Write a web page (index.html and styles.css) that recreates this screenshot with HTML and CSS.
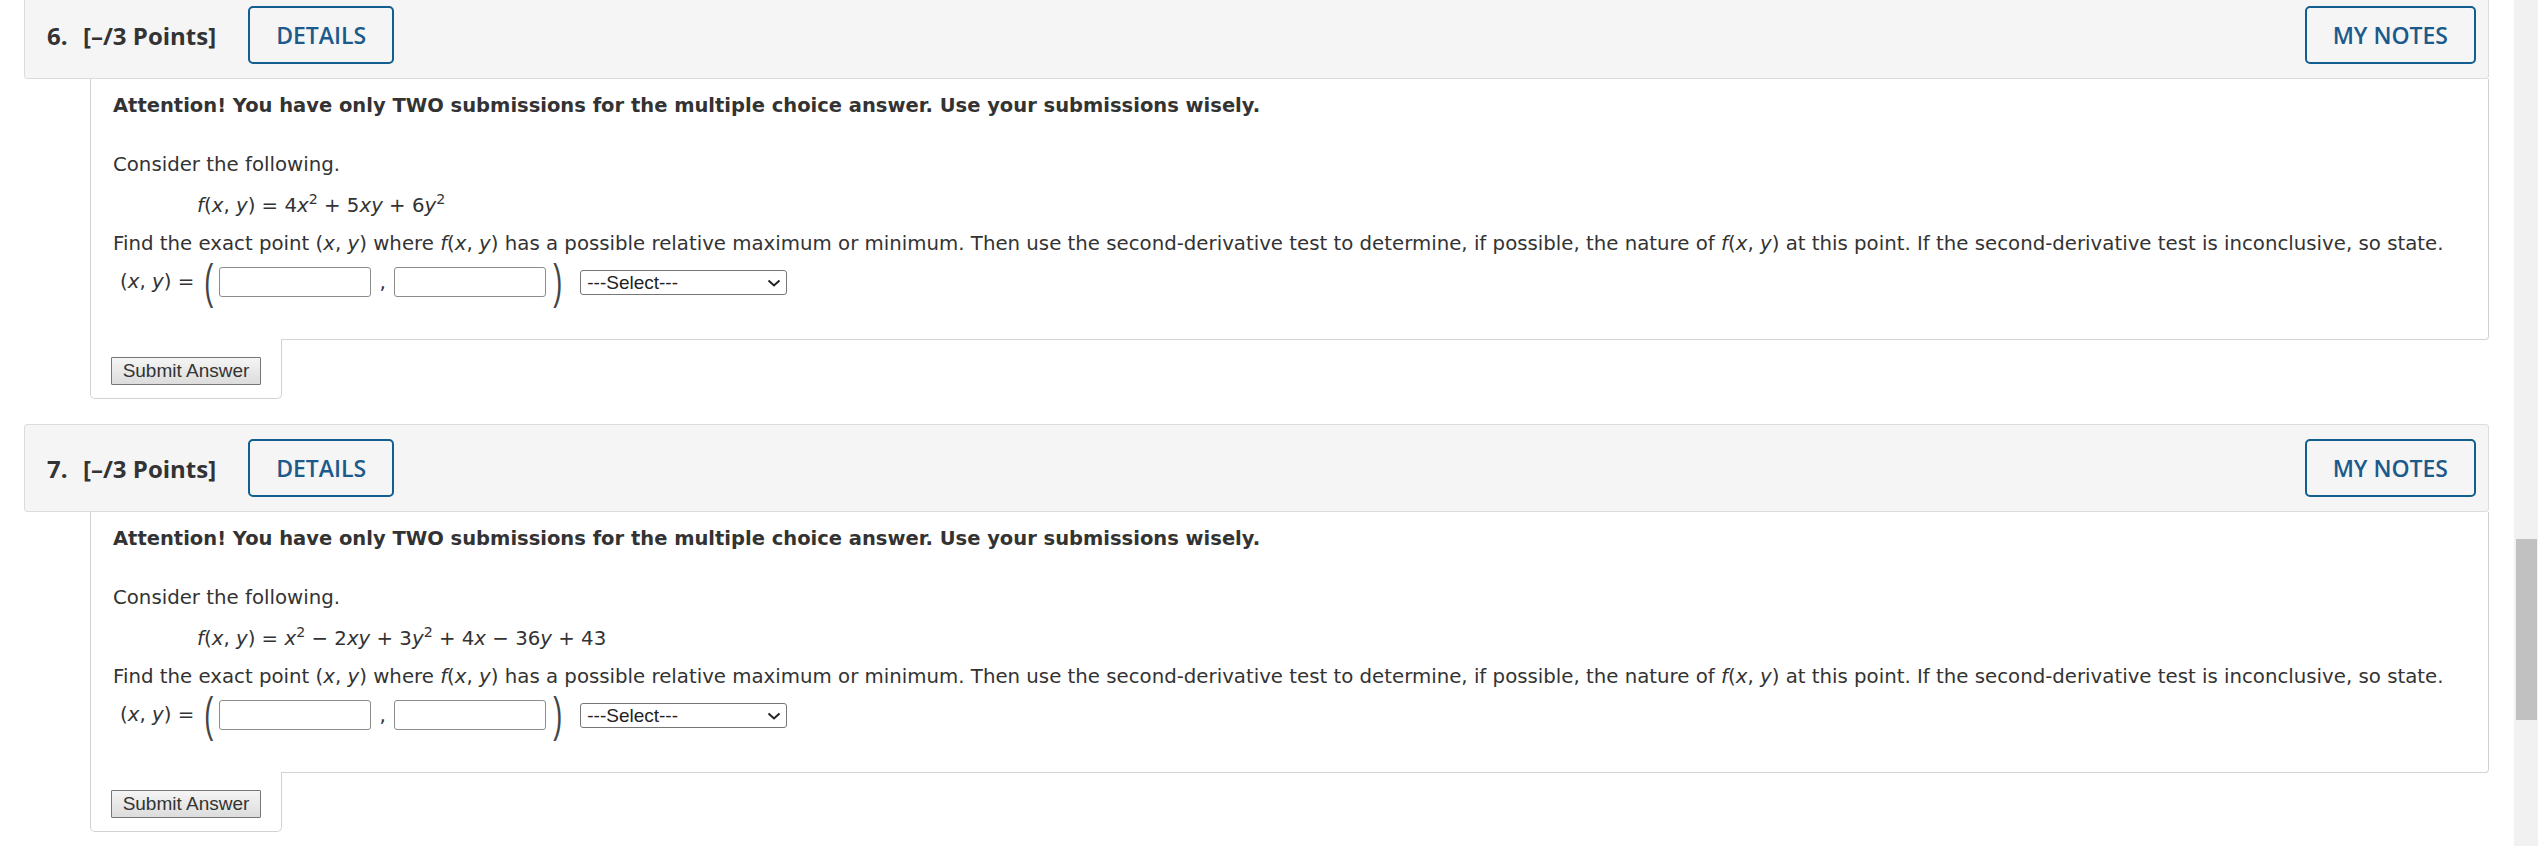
FILE: index.html
```html
<!DOCTYPE html>
<html>
<head>
<meta charset="utf-8">
<title>Questions</title>
<link rel="stylesheet" href="styles.css">
</head>
<body>
<div class="page">
  <section class="question">
    <div class="q-header">
      <span class="q-num">6.</span>
      <span class="q-points">[–/3 Points]</span>
      <button class="hdr-btn">DETAILS</button>
      <button class="hdr-btn notes">MY NOTES</button>
    </div>
    <div class="q-body">
      <p class="attention">Attention! You have only TWO submissions for the multiple choice answer. Use your submissions wisely.</p>
      <p class="consider">Consider the following.</p>
      <p class="formula"><i>f</i>(<i>x</i>, <i>y</i>) = 4<i>x</i><sup>2</sup> + 5<i>xy</i> + 6<i>y</i><sup>2</sup></p>
      <p class="find">Find the exact point (<i>x</i>, <i>y</i>) where <i>f</i>(<i>x</i>, <i>y</i>) has a possible relative maximum or minimum. Then use the second-derivative test to determine, if possible, the nature of <i>f</i>(<i>x</i>, <i>y</i>) at this point. If the second-derivative test is inconclusive, so state.</p>
      <div class="answer-row">
        <span class="lbl">(<i>x</i>, <i>y</i>) =</span>
        <span class="paren open">(</span>
        <input class="ans" type="text">
        <span class="comma">,</span>
        <input class="ans" type="text">
        <span class="paren close">)</span>
        <span class="sel-wrap">
          <select class="sel"><option>---Select---</option></select>
          <svg class="chev" width="14" height="8" viewBox="0 0 14 8"><path d="M1.5 1.5 L7 6.5 L12.5 1.5" fill="none" stroke="#222" stroke-width="2"/></svg>
        </span>
      </div>
    </div>
    <div class="submit-tab"><button class="submit">Submit Answer</button></div>
  </section>

  <section class="question">
    <div class="q-header">
      <span class="q-num">7.</span>
      <span class="q-points">[–/3 Points]</span>
      <button class="hdr-btn">DETAILS</button>
      <button class="hdr-btn notes">MY NOTES</button>
    </div>
    <div class="q-body">
      <p class="attention">Attention! You have only TWO submissions for the multiple choice answer. Use your submissions wisely.</p>
      <p class="consider">Consider the following.</p>
      <p class="formula"><i>f</i>(<i>x</i>, <i>y</i>) = <i>x</i><sup>2</sup> − 2<i>xy</i> + 3<i>y</i><sup>2</sup> + 4<i>x</i> − 36<i>y</i> + 43</p>
      <p class="find">Find the exact point (<i>x</i>, <i>y</i>) where <i>f</i>(<i>x</i>, <i>y</i>) has a possible relative maximum or minimum. Then use the second-derivative test to determine, if possible, the nature of <i>f</i>(<i>x</i>, <i>y</i>) at this point. If the second-derivative test is inconclusive, so state.</p>
      <div class="answer-row">
        <span class="lbl">(<i>x</i>, <i>y</i>) =</span>
        <span class="paren open">(</span>
        <input class="ans" type="text">
        <span class="comma">,</span>
        <input class="ans" type="text">
        <span class="paren close">)</span>
        <span class="sel-wrap">
          <select class="sel"><option>---Select---</option></select>
          <svg class="chev" width="14" height="8" viewBox="0 0 14 8"><path d="M1.5 1.5 L7 6.5 L12.5 1.5" fill="none" stroke="#222" stroke-width="2"/></svg>
        </span>
      </div>
    </div>
    <div class="submit-tab"><button class="submit">Submit Answer</button></div>
  </section>
</div>
<div class="scrollbar"><div class="thumb"></div></div>
</body>
</html>
```

FILE: styles.css
```css
* { box-sizing: border-box; }
html, body { margin: 0; padding: 0; background: #fff; }
body {
  font-family: "DejaVu Sans", Verdana, sans-serif;
  color: #333;
  overflow: hidden;
}
.page {
  width: 2513px;
  padding: 0 24px;
  margin-top: -9px;
}
.question { margin-bottom: 25px; }

.q-header {
  display: flex;
  align-items: center;
  height: 88px;
  background: #f5f5f5;
  border: 1px solid #dcdcdc;
  border-radius: 3px;
  padding: 0 12px 0 22px;
  font-family: "Open Sans", sans-serif;
}
.q-num {
  font-weight: 700;
  font-size: 24px;
  color: #333;
  width: 36px;
}
.q-points {
  font-weight: 700;
  font-size: 24px;
  color: #333;
  margin-right: 32px;
}
.hdr-btn {
  height: 58px;
  padding: 0 26px;
  border: 2px solid #125e8f;
  border-radius: 5px;
  background: transparent;
  color: #1b5a8b;
  font-family: "Open Sans", sans-serif;
  font-weight: 600;
  font-size: 23px;
}
.hdr-btn.notes { margin-left: auto; }

.q-body {
  margin-left: 66px;
  border: 1px solid #d2d2d2;
  border-top: none;
  border-radius: 0 0 4px 0;
  padding: 15px 22px 42px;
  font-size: 19.75px;
  line-height: 24px;
}
.q-body p { margin: 0; white-space: nowrap; }
.attention { font-weight: 700; font-size: 19.5px; margin-bottom: 35px !important; }
.consider { margin-bottom: 17px !important; }
.formula { padding-left: 84px; margin-bottom: 14px !important; }
.find { margin-bottom: 11px !important; }
sup { font-size: 0.72em; line-height: 0; vertical-align: 0.55em; }

.answer-row {
  display: flex;
  align-items: center;
  height: 30px;
  padding-left: 7px;
}
.lbl { margin-right: 10px; }
.paren {
  font-family: "Liberation Sans", sans-serif;
  font-size: 27px;
  line-height: 30px;
  color: #444;
  transform: scaleY(1.75);
}
.paren.open { margin-right: 6px; }
.paren.close { margin-left: 7px; margin-right: 18px; }
.ans {
  width: 152px;
  height: 30px;
  border: 1px solid #8c8c8c;
  border-radius: 3px;
  background: #fff;
  margin: 0;
}
.comma {
  width: 23px;
  text-align: center;
  font-size: 20px;
  line-height: 30px;
}
.sel-wrap { position: relative; display: flex; }
.sel {
  appearance: none;
  -webkit-appearance: none;
  width: 207px;
  height: 25px;
  border: 1px solid #767676;
  border-radius: 3px;
  background: #fff;
  font-family: "Liberation Sans", Arial, sans-serif;
  font-size: 19px;
  color: #222;
  padding: 0 0 0 6px;
  margin: 0;
}
.chev { position: absolute; right: 6px; top: 9px; }

.submit-tab {
  position: relative;
  width: 192px;
  margin-left: 66px;
  margin-top: -1px;
  background: #fff;
  border: 1px solid #d2d2d2;
  border-top: none;
  border-radius: 0 0 5px 5px;
  padding: 18px 20px 13px;
}
.submit {
  display: block;
  width: 150px;
  height: 28px;
  padding: 0;
  border: 1px solid #767676;
  border-radius: 1px;
  background: linear-gradient(#f5f5f5, #dcdcdc);
  font-family: "Liberation Sans", Arial, sans-serif;
  font-size: 19px;
  color: #333;
}

.scrollbar {
  position: fixed;
  top: 0;
  right: 0;
  width: 24px;
  height: 846px;
  background: #f1f1f1;
}
.thumb {
  position: absolute;
  left: 2px;
  top: 539px;
  width: 21px;
  height: 181px;
  background: #c1c1c1;
}
```
